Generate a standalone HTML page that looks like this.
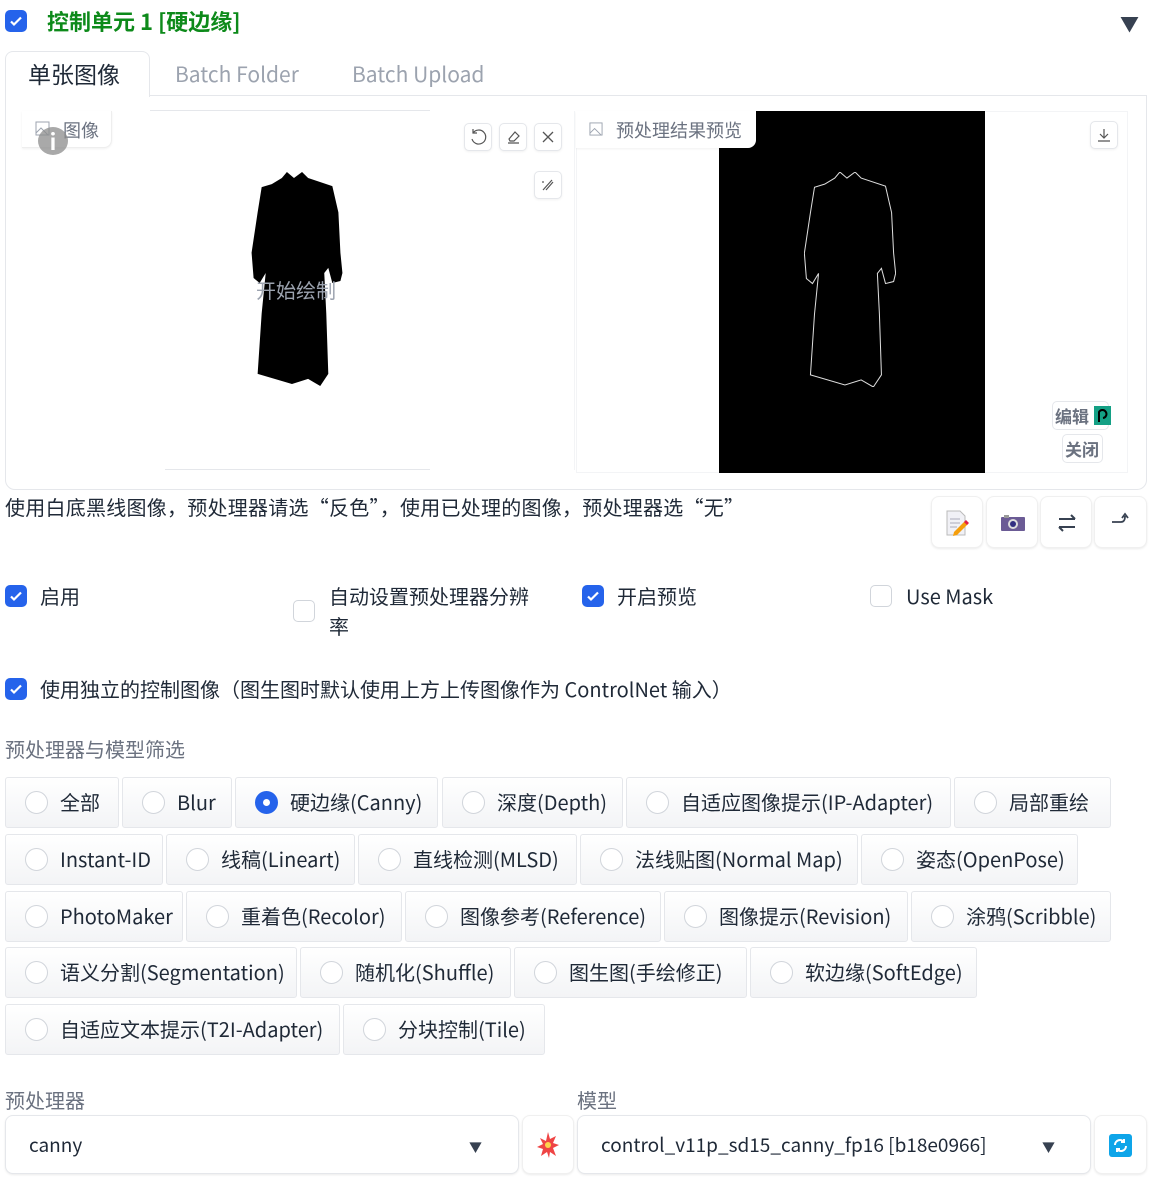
<!DOCTYPE html>
<html><head><meta charset="utf-8"><style>
*{box-sizing:border-box;margin:0;padding:0}
body{width:1154px;height:1188px;background:#fff;font-family:"Noto Sans CJK SC","Liberation Sans",sans-serif;color:#374151;position:relative;overflow:hidden}
.a{position:absolute}
.cb{position:absolute;width:22px;height:22px;border-radius:5px;background:#2563eb}
.cb svg{position:absolute;left:3px;top:3px}
.cbe{position:absolute;width:22px;height:22px;border-radius:5px;border:1px solid #d1d5db;background:#fff}
.t{position:absolute;font-size:20px;white-space:nowrap;line-height:24px;color:#1f2937}
.r{position:absolute;height:51px;border:1px solid #e5e7eb;border-radius:3px;background:linear-gradient(#fff,#f3f4f6);}
.r i{position:absolute;left:19px;top:13px;width:23px;height:23px;border-radius:50%;border:1px solid #d1d5db;background:#fff}
.r i.on{background:#2563eb;border-color:#2563eb}
.r i.on:after{content:"";position:absolute;left:7px;top:7px;width:7px;height:7px;border-radius:50%;background:#fff}
.r span{position:absolute;left:54px;top:12px;font-size:20px;color:#1f2937;white-space:nowrap;line-height:24px}
.btn{position:absolute;border-radius:8px;background:#fff;box-shadow:0 1px 2px rgba(0,0,0,.08);border:1px solid #f0f0f0}
.ib{position:absolute;width:28px;height:28px;border:1px solid #e5e7eb;border-radius:5px;background:#fff;box-shadow:0 1px 2px rgba(0,0,0,.06)}
</style></head><body>
<div class="cb" style="left:5px;top:10px"><svg width="16" height="16" viewBox="0 0 16 16"><path d="M3 8.5l3 3 7-7" stroke="#fff" stroke-width="2.2" fill="none"/></svg></div>
<div class="t" style="left:47px;top:7px;font-size:22px;font-weight:bold;color:#0d8a1a;line-height:28px">控制单元 1 [硬边缘]</div>
<div class="t" style="left:1120px;top:12px;font-size:19px;color:#374151">▼</div>

<div class="a" style="left:5px;top:95px;width:1142px;height:395px;border:1px solid #e5e7eb;border-radius:0 0 10px 10px"></div>
<div class="a" style="left:5px;top:51px;width:145px;height:46px;border:1px solid #e5e7eb;border-bottom:none;border-radius:8px 8px 0 0;background:#fff"></div>
<div class="t" style="left:28px;top:59px;font-size:23px;line-height:28px">单张图像</div>
<div class="t" style="left:175px;top:60px;font-size:21px;color:#9ca3af;line-height:28px">Batch Folder</div>
<div class="t" style="left:352px;top:60px;font-size:21px;color:#9ca3af;line-height:28px">Batch Upload</div>

<div class="a" style="left:22px;top:111px;width:553px;height:359px;background:#fff;border-right:1px solid #f3f4f6"></div>
<div class="a" style="left:150px;top:110px;width:280px;height:1px;background:#e5e7eb"></div>
<div class="a" style="left:165px;top:469px;width:265px;height:1px;background:#e5e7eb"></div>
<div class="a" style="left:22px;top:111px;width:90px;height:37px;border:1px solid #eee;border-top:none;border-left:none;border-radius:0 0 8px 0;background:#fff;box-shadow:0 1px 2px rgba(0,0,0,.06)"></div>
<svg class="a" style="left:35px;top:121px" width="15" height="15" viewBox="0 0 15 15"><rect x="1" y="1" width="13" height="13" fill="none" stroke="#9ca3af"/><path d="M1 12l5-5 7 7" stroke="#9ca3af" fill="none"/></svg>
<div class="t" style="left:63px;top:118px;font-size:18px;color:#6b7280">图像</div>
<div class="a" style="left:38px;top:127px;width:30px;height:28px;border-radius:50%;background:rgba(140,140,140,.75);color:#fff;font-size:22px;text-align:center;line-height:28px;font-weight:bold">i</div>
<div class="ib" style="left:464px;top:123px"><svg width="26" height="26" viewBox="0 0 26 26"><path d="M8 9a7 7 0 1 1-1 6M8 5v4h4" stroke="#555" fill="none" stroke-width="1.2"/></svg></div>
<div class="ib" style="left:499px;top:123px"><svg width="26" height="26" viewBox="0 0 26 26"><path d="M9 15l6-7 4 4-5 5h-4zM8 19h11" stroke="#555" fill="none" stroke-width="1.2"/></svg></div>
<div class="ib" style="left:534px;top:123px"><svg width="26" height="26" viewBox="0 0 26 26"><path d="M8 8l10 10M18 8L8 18" stroke="#555" stroke-width="1.3"/></svg></div>
<div class="ib" style="left:534px;top:171px"><svg width="26" height="26" viewBox="0 0 26 26"><path d="M8 18l9-10M11 18l7-8M8 9v2" stroke="#555" fill="none" stroke-width="1.2"/></svg></div>
<svg class="a" style="left:250px;top:172px" width="94" height="214" viewBox="0 0 90 212"><path d="M20 12L30 6 35 0 42 6 50 0 56 6 80 14 86 40 88 80 90 100 88 108 80 110 76 95 72 100 74 140 76 200 68 212 56 205 40 210 6 200 10 140 14 100 8 110 2 105 0 80 6 40 10 15Z" fill="#000"/></svg>
<div class="t" style="left:256px;top:278px;font-size:20px;color:#9ca3af">开始绘制</div>

<div class="a" style="left:576px;top:111px;width:552px;height:362px;background:#fff;border:1px solid #f3f4f6"></div>
<div class="a" style="left:719px;top:111px;width:266px;height:362px;background:#000"></div>
<svg class="a" style="left:804px;top:172px" width="92" height="215" viewBox="0 0 90 212"><path d="M20 12L30 6 35 0 42 6 50 0 56 6 80 14 86 40 88 80 90 100 88 108 80 110 76 95 72 100 74 140 76 200 68 212 56 205 40 210 6 200 10 140 14 100 8 110 2 105 0 80 6 40 10 15Z" fill="none" stroke="#ddd" stroke-width="1"/></svg>
<div class="a" style="left:576px;top:111px;width:180px;height:37px;border-radius:0 0 8px 0;background:#fff;box-shadow:0 1px 2px rgba(0,0,0,.06)"></div>
<svg class="a" style="left:589px;top:122px" width="14" height="14" viewBox="0 0 15 15"><rect x="1" y="1" width="13" height="13" fill="none" stroke="#9ca3af"/><path d="M1 12l5-5 7 7" stroke="#9ca3af" fill="none"/></svg>
<div class="t" style="left:616px;top:118px;font-size:18px;color:#6b7280">预处理结果预览</div>
<div class="ib" style="left:1090px;top:121px"><svg width="26" height="26" viewBox="0 0 26 26"><path d="M13 7v9M9 12l4 4 4-4M7 19h12" stroke="#555" fill="none" stroke-width="1.2"/></svg></div>
<div class="a" style="left:1052px;top:401px;width:57px;height:29px;border:1px solid #e5e7eb;border-radius:5px;background:#fff"></div>
<div class="t" style="left:1055px;top:404px;font-size:17px;font-weight:bold;color:#6b7280">编辑</div>
<div class="a" style="left:1094px;top:406px;width:17px;height:19px;background:#14a085"><svg width="17" height="19"><path d="M5 16V6a4 4 0 1 1 4 6" stroke="#000" stroke-width="2" fill="none"/></svg></div>
<div class="a" style="left:1062px;top:434px;width:41px;height:29px;border:1px solid #e5e7eb;border-radius:5px;background:#fff"></div>
<div class="t" style="left:1065px;top:437px;font-size:17px;font-weight:bold;color:#6b7280">关闭</div>

<div class="t" style="left:5px;top:495px;font-size:20px;letter-spacing:0.25px">使用白底黑线图像，预处理器请选“反色”，使用已处理的图像，预处理器选“无”</div>
<div class="btn" style="left:931px;top:496px;width:52px;height:52px"><svg style="margin:13px" width="24" height="26" viewBox="0 0 24 26"><path d="M2 1h13l5 5v19H2z" fill="#f1f1f6" stroke="#bbb"/><path d="M5 9h10M5 13h10M5 17h7" stroke="#aab"/><path d="M9 22l11-11 3 3-11 11-4 1z" fill="#f59e0b"/><path d="M19 12l3 3 2-2-3-3z" fill="#e11d48"/></svg></div>
<div class="btn" style="left:986px;top:496px;width:52px;height:52px"><svg style="margin:17px 14px" width="24" height="18" viewBox="0 0 24 18"><rect x="0" y="3" width="24" height="14" rx="1" fill="#6b5b95"/><circle cx="12" cy="10" r="5" fill="#ddd"/><circle cx="12" cy="10" r="3" fill="#312e81"/><rect x="3" y="1" width="5" height="3" fill="#999"/></svg></div>
<div class="btn" style="left:1040px;top:496px;width:52px;height:52px"><svg style="margin:14px" width="24" height="24" viewBox="0 0 24 24"><path d="M4 8h16M16 4l4 4M20 16H4M8 20l-4-4" stroke="#374151" stroke-width="2" fill="none"/></svg></div>
<div class="btn" style="left:1094px;top:496px;width:53px;height:52px"><svg style="margin:12px 14px" width="24" height="24" viewBox="0 0 24 24"><path d="M3 13h9c3 0 4-2 4-6M13 9l3-4 3 4" stroke="#374151" stroke-width="1.8" fill="none"/></svg></div>

<div class="cb" style="left:5px;top:585px"><svg width="16" height="16" viewBox="0 0 16 16"><path d="M3 8.5l3 3 7-7" stroke="#fff" stroke-width="2.2" fill="none"/></svg></div>
<div class="t" style="left:40px;top:584px">启用</div>
<div class="cbe" style="left:293px;top:600px"></div>
<div class="t" style="left:329px;top:584px">自动设置预处理器分辨</div>
<div class="t" style="left:329px;top:614px">率</div>
<div class="cb" style="left:582px;top:585px"><svg width="16" height="16" viewBox="0 0 16 16"><path d="M3 8.5l3 3 7-7" stroke="#fff" stroke-width="2.2" fill="none"/></svg></div>
<div class="t" style="left:617px;top:584px">开启预览</div>
<div class="cbe" style="left:870px;top:585px"></div>
<div class="t" style="left:906px;top:584px">Use Mask</div>
<div class="cb" style="left:5px;top:678px"><svg width="16" height="16" viewBox="0 0 16 16"><path d="M3 8.5l3 3 7-7" stroke="#fff" stroke-width="2.2" fill="none"/></svg></div>
<div class="t" style="left:40px;top:677px">使用独立的控制图像（图生图时默认使用上方上传图像作为 ControlNet 输入）</div>
<div class="t" style="left:5px;top:737px;color:#6b7280">预处理器与模型筛选</div>

<div class="r" style="left:5px;top:777px;width:114px"><i></i><span>全部</span></div>
<div class="r" style="left:122px;top:777px;width:110px"><i></i><span>Blur</span></div>
<div class="r" style="left:235px;top:777px;width:203px"><i class="on"></i><span>硬边缘(Canny)</span></div>
<div class="r" style="left:442px;top:777px;width:181px"><i></i><span>深度(Depth)</span></div>
<div class="r" style="left:626px;top:777px;width:325px"><i></i><span>自适应图像提示(IP-Adapter)</span></div>
<div class="r" style="left:954px;top:777px;width:157px"><i></i><span>局部重绘</span></div>

<div class="r" style="left:5px;top:834px;width:158px"><i></i><span>Instant-ID</span></div>
<div class="r" style="left:166px;top:834px;width:189px"><i></i><span>线稿(Lineart)</span></div>
<div class="r" style="left:358px;top:834px;width:219px"><i></i><span>直线检测(MLSD)</span></div>
<div class="r" style="left:580px;top:834px;width:278px"><i></i><span>法线贴图(Normal Map)</span></div>
<div class="r" style="left:861px;top:834px;width:217px"><i></i><span>姿态(OpenPose)</span></div>

<div class="r" style="left:5px;top:891px;width:178px"><i></i><span>PhotoMaker</span></div>
<div class="r" style="left:186px;top:891px;width:216px"><i></i><span>重着色(Recolor)</span></div>
<div class="r" style="left:405px;top:891px;width:256px"><i></i><span>图像参考(Reference)</span></div>
<div class="r" style="left:664px;top:891px;width:244px"><i></i><span>图像提示(Revision)</span></div>
<div class="r" style="left:911px;top:891px;width:200px"><i></i><span>涂鸦(Scribble)</span></div>

<div class="r" style="left:5px;top:947px;width:292px"><i></i><span>语义分割(Segmentation)</span></div>
<div class="r" style="left:300px;top:947px;width:211px"><i></i><span>随机化(Shuffle)</span></div>
<div class="r" style="left:514px;top:947px;width:233px"><i></i><span>图生图(手绘修正)</span></div>
<div class="r" style="left:750px;top:947px;width:227px"><i></i><span>软边缘(SoftEdge)</span></div>

<div class="r" style="left:5px;top:1004px;width:335px"><i></i><span>自适应文本提示(T2I-Adapter)</span></div>
<div class="r" style="left:343px;top:1004px;width:202px"><i></i><span>分块控制(Tile)</span></div>

<div class="t" style="left:5px;top:1088px;color:#6b7280">预处理器</div>
<div class="t" style="left:577px;top:1088px;color:#6b7280">模型</div>
<div class="btn" style="left:5px;top:1115px;width:514px;height:59px;border:1px solid #e5e7eb"></div>
<div class="t" style="left:29px;top:1133px;font-size:19px">canny</div>
<div class="t" style="left:469px;top:1135px;font-size:13px;color:#374151">▼</div>
<div class="btn" style="left:522px;top:1115px;width:52px;height:59px"></div>
<svg class="a" style="left:537px;top:1132px" width="22" height="26" viewBox="0 0 22 26"><path d="M11 0l2 7 6-3-3 7 6 2-6 3 3 8-6-4-1 6-2-6-6 4 2-7-6-2 6-3-3-6 6 3z" fill="#ef4444"/><circle cx="11" cy="13" r="3" fill="#fcd34d"/></svg>
<div class="btn" style="left:577px;top:1115px;width:514px;height:59px;border:1px solid #e5e7eb"></div>
<div class="t" style="left:601px;top:1133px;font-size:19px">control_v11p_sd15_canny_fp16 [b18e0966]</div>
<div class="t" style="left:1042px;top:1135px;font-size:13px;color:#374151">▼</div>
<div class="btn" style="left:1094px;top:1115px;width:53px;height:59px"></div>
<div class="a" style="left:1109px;top:1134px;width:23px;height:23px;border-radius:3px;background:#0ea5e9"><svg width="23" height="23" viewBox="0 0 23 23"><path d="M6 11a5 5 0 0 1 9-3M17 12a5 5 0 0 1-9 3M15 5v3h-3M8 18v-3h3" stroke="#fff" stroke-width="2" fill="none"/></svg></div>
</body></html>
